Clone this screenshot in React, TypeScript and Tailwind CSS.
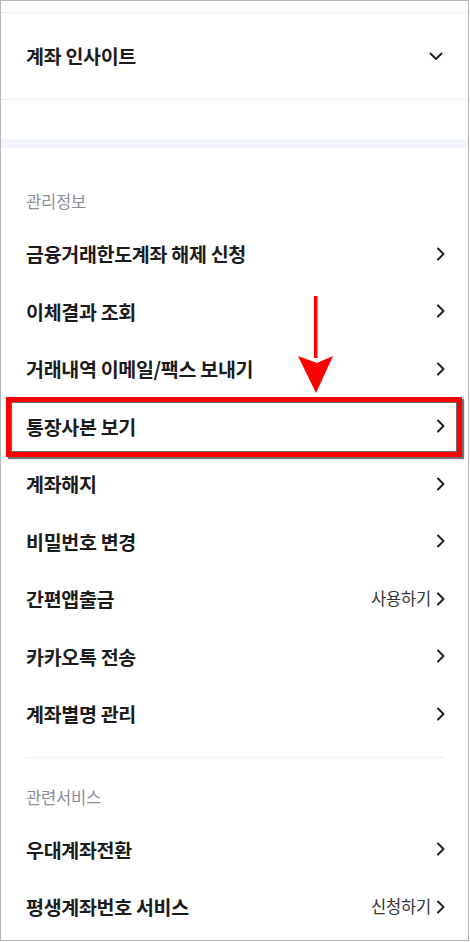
import React from "react";

const font = { fontFamily: '"Noto Sans CJK KR", "Noto Sans", sans-serif' };

function ChevronRight() {
  return (
    <svg width="10" height="14" viewBox="0 0 10 14" className="shrink-0">
      <path d="M2 1.5 L7.5 7 L2 12.5" fill="none" stroke="#222" strokeWidth="2" strokeLinecap="round" strokeLinejoin="round" />
    </svg>
  );
}

function Row({ label, extra }: { label: string; extra?: string }) {
  return (
    <div className="flex items-center justify-between h-[57.5px]">
      <span className="text-[19.5px] font-bold text-[#1c1c1c] tracking-[-0.3px]">{label}</span>
      <div className="flex items-center gap-[5px]">
        {extra && <span className="text-[16.5px] text-[#333] tracking-[-0.2px]">{extra}</span>}
        <ChevronRight />
      </div>
    </div>
  );
}

export default function App() {
  const items1 = [
    { label: "금융거래한도계좌 해제 신청" },
    { label: "이체결과 조회" },
    { label: "거래내역 이메일/팩스 보내기" },
    { label: "통장사본 보기" },
    { label: "계좌해지" },
    { label: "비밀번호 변경" },
    { label: "간편앱출금", extra: "사용하기" },
    { label: "카카오톡 전송" },
    { label: "계좌별명 관리" },
  ];
  const items2 = [
    { label: "우대계좌전환" },
    { label: "평생계좌번호 서비스", extra: "신청하기" },
  ];
  return (
    <div className="w-[470px] h-[942px] bg-white relative overflow-hidden" style={font}>
      <div className="w-[469px] h-[941px] border border-[#b5b5b5] flex flex-col overflow-hidden">
        <div className="h-[11px] border-b border-[#edf0f4] box-content" />
        <div className="h-[86px] border-b border-[#edf0f4] box-content flex items-center justify-between pl-[25px] pr-[25px]">
          <span className="text-[19.5px] font-bold text-[#1c1c1c] tracking-[-0.3px]">계좌 인사이트</span>
          <svg width="14" height="9" viewBox="0 0 14 9">
            <path d="M1.5 1.5 L7 7 L12.5 1.5" fill="none" stroke="#222" strokeWidth="2" strokeLinecap="round" strokeLinejoin="round" />
          </svg>
        </div>
        <div className="h-[39px]" />
        <div className="h-[9px] bg-[#f2f5f9]" />
        <div className="pl-[25px] pr-[22px] flex flex-col">
          <div className="pt-[42px] h-[22px] box-content leading-[22px] text-[16.5px] text-[#8a8e96] tracking-[-0.2px]">관리정보</div>
          <div className="mt-[13px] flex flex-col">
            {items1.map((it) => (
              <Row key={it.label} label={it.label} extra={it.extra} />
            ))}
          </div>
          <div className="mt-[14px] h-px bg-[#e9edf2] mr-[1px]" />
          <div className="pt-[28px] h-[22px] box-content leading-[22px] text-[16.5px] text-[#8a8e96] tracking-[-0.2px]">관련서비스</div>
          <div className="mt-[13px] flex flex-col">
            {items2.map((it) => (
              <Row key={it.label} label={it.label} extra={it.extra} />
            ))}
          </div>
        </div>
      </div>

      {/* red highlight box */}
      <div className="absolute left-[6px] top-[397px] w-[456px] h-[60px] border-[5px] border-[#ff0000] shadow-[2px_2px_1px_rgba(0,0,0,0.55)]">
        <div className="w-full h-full border border-[#6b6b6b]" />
      </div>

      {/* arrow */}
      <svg className="absolute left-[296px] top-[294px]" width="40" height="102" viewBox="0 0 40 102">
        <rect x="18" y="2" width="3.5" height="62" fill="#ff0000" />
        <path d="M2 62 L20 99 L37 62 L21 69 Z" fill="#ff0000" />
      </svg>
    </div>
  );
}
